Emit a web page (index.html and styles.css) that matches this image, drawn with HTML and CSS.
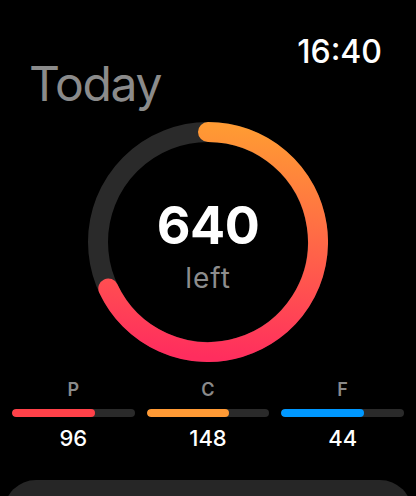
FILE: index.html
```html
<!DOCTYPE html>
<html>
<head>
<meta charset="utf-8">
<link rel="stylesheet" href="styles.css">
</head>
<body>
<div class="screen">
  <div class="status"><span class="time">16:40</span></div>
  <h1 class="title">Today</h1>
  <div class="ring">
    <svg class="ring-svg" width="240" height="240" viewBox="0 0 240 240">
      <defs>
        <linearGradient id="ringGrad" gradientUnits="userSpaceOnUse" x1="130" y1="5" x2="110" y2="235">
          <stop offset="0" stop-color="#FF9A33"/>
          <stop offset="1" stop-color="#FF2D5E"/>
        </linearGradient>
      </defs>
      <circle cx="120" cy="120" r="110" fill="none" stroke="#2a2a2a" stroke-width="20"/>
      <path d="M120 10 A110 110 0 1 1 20.31 166.49" fill="none" stroke="url(#ringGrad)" stroke-width="20" stroke-linecap="round"/>
    </svg>
    <div class="ring-label">
      <span class="ring-value">640</span>
      <span class="ring-sub">left</span>
    </div>
  </div>
  <div class="macros">
    <div class="macro">
      <span class="macro-label">P</span>
      <div class="bar"><div class="bar-fill fill-p" style="width:68%"></div></div>
      <span class="macro-value">96</span>
    </div>
    <div class="macro">
      <span class="macro-label">C</span>
      <div class="bar"><div class="bar-fill fill-c" style="width:67%"></div></div>
      <span class="macro-value">148</span>
    </div>
    <div class="macro">
      <span class="macro-label">F</span>
      <div class="bar"><div class="bar-fill fill-f" style="width:67%"></div></div>
      <span class="macro-value">44</span>
    </div>
  </div>
  <div class="card-clip"><div class="card"></div></div>
</div>
</body>
</html>
```

FILE: styles.css
```css
html, body {
  margin: 0;
  padding: 0;
  background: #000;
}
body {
  width: 416px;
  height: 496px;
  overflow: hidden;
  font-family: Inter, "Noto Sans", "Liberation Sans", sans-serif;
  color: #fff;
}
.screen {
  display: flex;
  flex-direction: column;
  height: 496px;
}
.status {
  display: flex;
  justify-content: flex-end;
  padding: 40px 34px 0 0;
  height: 24px;
}
.time {
  font-size: 32px;
  line-height: 24px;
  font-weight: 500;
  color: #fff;
}
.title {
  margin: 0;
  padding-left: 29px;
  font-size: 48px;
  line-height: 40px;
  font-weight: 400;
  color: #8b8b8b;
  letter-spacing: -1.3px;
}
.ring {
  position: relative;
  align-self: center;
  width: 240px;
  height: 240px;
  margin-top: 18px;
}
.ring-svg {
  display: block;
}
.ring-label {
  position: absolute;
  inset: 0;
  display: flex;
  flex-direction: column;
  align-items: center;
  padding-top: 78px;
}
.ring-value {
  font-size: 52px;
  line-height: 52px;
  font-weight: 700;
  color: #fff;
  letter-spacing: -0.5px;
}
.ring-sub {
  margin-top: 12px;
  font-size: 28px;
  line-height: 28px;
  font-weight: 400;
  color: #8d8d8d;
  letter-spacing: 1px;
}
.macros {
  display: grid;
  grid-template-columns: repeat(3, 1fr);
  column-gap: 12px;
  padding: 0 12px;
  margin-top: 19px;
}
.macro {
  display: flex;
  flex-direction: column;
  align-items: center;
}
.macro-label {
  font-size: 18px;
  line-height: 18px;
  font-weight: 600;
  color: #8a8a8a;
}
.bar {
  align-self: stretch;
  height: 8px;
  margin-top: 10px;
  border-radius: 4px;
  background: #2a2a2a;
  overflow: hidden;
}
.bar-fill {
  height: 100%;
  border-radius: 4px;
}
.fill-p { background: #FF4149; }
.fill-c { background: #FF9A35; }
.fill-f { background: #0098FF; }
.macro-value {
  margin-top: 10px;
  font-size: 22px;
  line-height: 22px;
  font-weight: 500;
  color: #fff;
}
.card-clip {
  flex: 1;
  margin-top: 31px;
  overflow: hidden;
}
.card {
  margin: 0 4px;
  height: 120px;
  border-radius: 32px;
  background: #262626;
}
```
